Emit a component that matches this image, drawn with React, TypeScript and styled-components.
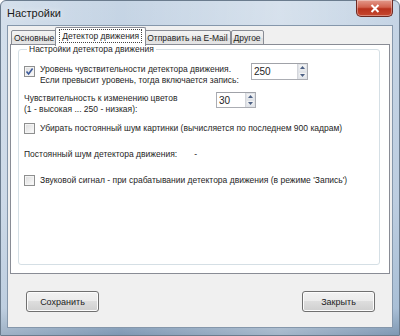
import styled, { createGlobalStyle } from "styled-components";

const GlobalStyle = createGlobalStyle`
  html, body {
    margin: 0;
    padding: 0;
    background: #ffffff;
  }
  * {
    box-sizing: border-box;
  }
`;

const Window = styled.div`
  width: 400px;
  height: 336px;
  display: flex;
  flex-direction: column;
  padding: 0 6px 7px 6px;
  border: 1px solid #6b7c8e;
  border-radius: 6px 6px 0 0;
  background:
    linear-gradient(90deg, rgba(255,255,255,0.25) 0%, rgba(255,255,255,0) 30%, rgba(255,255,255,0.3) 70%, rgba(255,255,255,0) 100%),
    linear-gradient(180deg, #c6d5e5 0%, #bccde0 60%, #a9bfd6 92%, #7f98b3 100%);
  font-family: "Liberation Sans", Arial, sans-serif;
  font-size: 8.5px;
  color: #1e1e1e;
`;

const TitleBar = styled.div`
  height: 24px;
  display: flex;
  align-items: flex-start;
  justify-content: space-between;
`;

const Title = styled.span`
  margin-top: 6px;
  font-size: 11px;
  color: #1a1a1a;
  text-shadow: 0 0 6px rgba(255, 255, 255, 0.9);
`;

const CloseButton = styled.div`
  width: 37px;
  height: 17px;
  margin-top: -1px;
  display: flex;
  align-items: center;
  justify-content: center;
  border: 1px solid #6d2a22;
  border-top: none;
  border-radius: 0 0 5px 5px;
  background: linear-gradient(180deg, #e39a8c 0%, #d2624e 45%, #b8321d 55%, #c6482f 100%);
  box-shadow: inset 0 0 0 1px rgba(255, 255, 255, 0.35);
`;

const Client = styled.div`
  flex: 1;
  display: flex;
  flex-direction: column;
  background: #f0f0f0;
  border: 1px solid #8597ab;
  padding: 1px 1px 0 2px;
`;

const TabRow = styled.div`
  display: flex;
  align-items: flex-end;
  height: 18px;
  padding-left: 1px;
  position: relative;
  z-index: 1;
`;

const Tab = styled.div<{ $active?: boolean }>`
  height: ${(p) => (p.$active ? "19px" : "15px")};
  margin: ${(p) => (p.$active ? "0 -2px -1px -2px" : "0")};
  padding: ${(p) => (p.$active ? "2px 4px 0" : "1px 2px 0")};
  border: 1px solid #898c95;
  border-bottom: ${(p) => (p.$active ? "none" : "1px solid #898c95")};
  border-radius: 2px 2px 0 0;
  background: ${(p) =>
    p.$active ? "#ffffff" : "linear-gradient(180deg, #f3f3f3 0%, #ebebeb 50%, #dedede 51%, #e5e5e5 100%)"};
  display: flex;
  align-items: flex-start;
  white-space: nowrap;
  position: relative;
  z-index: ${(p) => (p.$active ? 2 : 1)};
`;

const FocusLabel = styled.span`
  outline: 1px dotted #444;
  padding: 1px 2px 0;
  line-height: 11px;
`;

const TabLabel = styled.span`
  line-height: 12px;
`;

const Panel = styled.div`
  height: 230px;
  margin-right: 1px;
  margin-top: -1px;
  border: 1px solid #898c95;
  background: #ffffff;
  padding: 0 9px 8px 7px;
  display: flex;
`;

const Group = styled.fieldset`
  flex: 1;
  margin: 0;
  padding: 4px 5px 0 5px;
  border: 1px solid #d5dfe5;
  border-radius: 3px;
  display: flex;
  flex-direction: column;
`;

const Legend = styled.legend`
  padding: 0 2px;
  margin-left: 3px;
  line-height: 9px;
`;

const Row = styled.div<{ $top: number }>`
  display: flex;
  align-items: flex-start;
  margin-top: ${(p) => p.$top}px;
`;

const TextBlock = styled.div<{ $width: number }>`
  width: ${(p) => p.$width}px;
  line-height: 11px;
  padding-top: 1px;
  white-space: nowrap;
`;

const Line = styled.div`
  line-height: 11px;
  white-space: nowrap;
`;

const Box = styled.span<{ $shift?: number }>`
  width: 11px;
  height: 11px;
  margin-top: ${(p) => p.$shift ?? 0}px;
  margin-right: 5px;
  flex: none;
  border: 1px solid #8e8f8f;
  background: linear-gradient(135deg, #dcdcdc 0%, #f2f2f2 70%, #ffffff 100%);
  box-shadow: inset 0 0 0 1px #f4f4f4;
  display: flex;
  align-items: center;
  justify-content: center;
`;

const Spin = styled.div<{ $width: number; $height: number }>`
  width: ${(p) => p.$width}px;
  height: ${(p) => p.$height}px;
  border: 1px solid #abadb3;
  border-top-color: #a0a2a8;
  background: #ffffff;
  display: flex;
`;

const SpinValue = styled.span`
  flex: 1;
  padding: 2px 0 0 2px;
  font-size: 10px;
  line-height: 11px;
`;

const SpinButtons = styled.div`
  width: 10px;
  display: flex;
  flex-direction: column;
  border-left: 1px solid #d4d6db;
`;

const SpinButton = styled.div`
  flex: 1;
  display: flex;
  align-items: center;
  justify-content: center;
  background: linear-gradient(180deg, #f4f4f4 0%, #e3e6ea 100%);
  border: 1px solid #e0e3e8;
`;

const Dash = styled.span`
  margin-left: 17px;
`;

const Footer = styled.div`
  flex: 1;
  display: flex;
  align-items: flex-start;
  justify-content: space-between;
  padding: 17px 16px 0 16px;
`;

const Button = styled.div`
  width: 73px;
  height: 21px;
  border: 1px solid #707070;
  border-radius: 3px;
  background: linear-gradient(180deg, #f2f2f2 0%, #ebebeb 49%, #dddddd 50%, #cfcfcf 100%);
  box-shadow: inset 0 0 0 1px #fcfcfc;
  display: flex;
  align-items: center;
  justify-content: center;
  font-size: 9px;
`;

const Check = () => (
  <svg width="9" height="9" viewBox="0 0 9 9">
    <path d="M1.5 4.5 L3.6 7 L7.6 1.6" fill="none" stroke="#3c5a9a" strokeWidth="1.6" />
  </svg>
);

const Arrow = ({ up }: { up?: boolean }) => (
  <svg width="5" height="3" viewBox="0 0 5 3">
    <path d={up ? "M0 3 L2.5 0 L5 3 Z" : "M0 0 L2.5 3 L5 0 Z"} fill="#4d6185" />
  </svg>
);

function SpinBox({ value, width, height }: { value: string; width: number; height: number }) {
  return (
    <Spin $width={width} $height={height}>
      <SpinValue>{value}</SpinValue>
      <SpinButtons>
        <SpinButton>
          <Arrow up />
        </SpinButton>
        <SpinButton>
          <Arrow />
        </SpinButton>
      </SpinButtons>
    </Spin>
  );
}

export default function App() {
  return (
    <>
      <GlobalStyle />
      <Window>
        <TitleBar>
          <Title>Настройки</Title>
          <CloseButton>
            <svg width="10" height="9" viewBox="0 0 10 9">
              <path d="M1.5 1 L8.5 8 M8.5 1 L1.5 8" stroke="#ffffff" strokeWidth="2" />
            </svg>
          </CloseButton>
        </TitleBar>
        <Client>
          <TabRow>
            <Tab>
              <TabLabel>Основные</TabLabel>
            </Tab>
            <Tab $active>
              <FocusLabel>Детектор движения</FocusLabel>
            </Tab>
            <Tab>
              <TabLabel>Отправить на E-Mail</TabLabel>
            </Tab>
            <Tab>
              <TabLabel>Другое</TabLabel>
            </Tab>
          </TabRow>
          <Panel>
            <Group>
              <Legend>Настройки детектора движения</Legend>
              <Row $top={5}>
                <Box $shift={3}>
                  <Check />
                </Box>
                <TextBlock $width={211}>
                  <Line>Уровень чувствительности детектора движения.</Line>
                  <Line>Если превысит уровень, тогда включается запись:</Line>
                </TextBlock>
                <SpinBox value="250" width={57} height={17} />
              </Row>
              <Row $top={6}>
                <TextBlock $width={192}>
                  <Line>Чувствительность к изменению цветов</Line>
                  <Line>(1 - высокая ... 250 - низкая):</Line>
                </TextBlock>
                <SpinBox value="30" width={40} height={16} />
              </Row>
              <Row $top={8}>
                <Box />
                <Line>Убирать постоянный шум картинки (вычисляется по последнем 900 кадрам)</Line>
              </Row>
              <Row $top={15}>
                <Line>Постоянный шум детектора движения:</Line>
                <Dash>-</Dash>
              </Row>
              <Row $top={15}>
                <Box />
                <Line>Звуковой сигнал - при срабатывании детектора движения (в режиме 'Запись')</Line>
              </Row>
            </Group>
          </Panel>
          <Footer>
            <Button>Сохранить</Button>
            <Button>Закрыть</Button>
          </Footer>
        </Client>
      </Window>
    </>
  );
}
